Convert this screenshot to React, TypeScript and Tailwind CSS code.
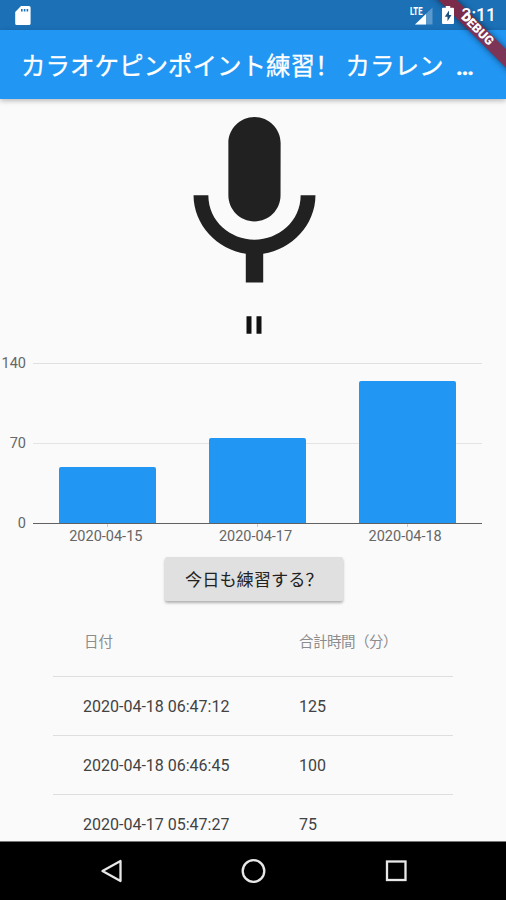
type Practice = {
  date: string;
  minutes: number;
};

const totals: Practice[] = [
  { date: '2020-04-15', minutes: 49 },
  { date: '2020-04-17', minutes: 75 },
  { date: '2020-04-18', minutes: 125 }
];

const history: Practice[] = [
  { date: '2020-04-18 06:47:12', minutes: 125 },
  { date: '2020-04-18 06:46:45', minutes: 100 },
  { date: '2020-04-17 05:47:27', minutes: 75 }
];

const CHART_MAX = 140;

// The icons and clock sit above the debug ribbon, the bar itself below it
const StatusBar = () => (
  <div className="flex h-[30px] shrink-0 items-center justify-between bg-[#1b70b6] pl-[15px] pr-[10px] text-white">
    <svg className="h-[19px] w-[16px]" viewBox="0 0 16 19" fill="currentColor">
      <path
        fillRule="evenodd"
        d="M6 0h8a1.6 1.6 0 0 1 1.6 1.6v15.8A1.6 1.6 0 0 1 14 19H1.8A1.6 1.6 0 0 1 .2 17.4V6zM6 3v2.400h1.600V3zm2.800 0v2.400h1.600V3zm2.800 0v2.400h1.600V3z"
      />
    </svg>
    <div className="relative z-30 flex items-center">
      <svg className="h-[19px] w-[24px]" viewBox="0 0 24 19">
        <path d="M22.500 1.500v17H5z" fill="#5b98cb" />
        <path d="M16 8v10.500H5z" fill="#fff" />
        <text x="0" y="9" fontSize="10" fontWeight="800" fontFamily="Roboto, sans-serif" fill="#fff" textLength="12.500" lengthAdjust="spacingAndGlyphs">
          LTE
        </text>
      </svg>
      <svg className="ml-[8px] h-[18px] w-[12px]" viewBox="0 0 12 18">
        <path d="M3.800 0h4.400v1.800H11a1 1 0 0 1 1 1V17a1 1 0 0 1-1 1H1a1 1 0 0 1-1-1V2.800a1 1 0 0 1 1-1h2.800z" fill="#fff" />
        <path d="M7 4.500 2.800 10.800h2.700v4.400L9.500 9H7z" fill="#1b4f80" />
      </svg>
      <span className="ml-[8px] pt-[2px] text-[17.500px] font-medium leading-none">3:11</span>
    </div>
  </div>
);

const DebugBanner = () => (
  <div className="absolute left-[407px] top-[23px] z-20 flex h-[13px] w-[140px] rotate-45 items-center justify-center bg-[#941c30]/80 shadow-[0_0_6px_rgba(0,0,0,0.5)]">
    <span className="text-[12.500px] font-black leading-none text-white">DEBUG</span>
  </div>
);

const PracticeChart = () => (
  <div className="mt-[14px] flex h-[193px] shrink-0 text-[14.500px] text-[#666]">
    <div className="flex h-[177px] w-[26px] flex-col justify-between text-right leading-[17px]">
      <span>140</span>
      <span>70</span>
      <span>0</span>
    </div>
    <div className="ml-[7px] w-[449px] pt-[8px]">
      <div className="relative h-[161px] border-b border-t border-b-[#616161] border-t-[#e0e0e0]">
        <div className="absolute top-[79px] h-px w-full bg-[#e4e4e4]" />
        <div className="relative flex h-full items-end justify-around">
          {totals.map((day) => (
            <div
              key={day.date}
              className="w-[97px] rounded-t-[2px] bg-[#2196f3]"
              style={{ height: `${(day.minutes / CHART_MAX) * 100}%` }}
            />
          ))}
        </div>
      </div>
      <div className="flex justify-around">
        {totals.map((day) => (
          <div key={day.date} className="flex w-[97px] flex-col items-center">
            <div className="h-[3px] w-px bg-[#ccc]" />
            <span className="-ml-[4px] mt-px leading-[18px]">{day.date}</span>
          </div>
        ))}
      </div>
    </div>
  </div>
);

const HistoryTable = () => (
  <div className="ml-[53px] mt-[7px] w-[400px] shrink-0">
    <div className="flex h-[69px] items-center border-b border-[#dedede] pl-[31px] pt-[2px] text-[14.500px] text-[#8c8c8c]">
      <span className="w-[215px]">日付</span>
      <span className="tracking-[-0.500px]">合計時間（分）</span>
    </div>
    {history.map((row) => (
      <div key={row.date} className="flex h-[59px] items-center border-b border-[#dedede] pl-[30px] pt-[2px] text-[16px] text-[#424242]">
        <span className="w-[216px]">{row.date}</span>
        <span>{row.minutes}</span>
      </div>
    ))}
  </div>
);

const App = () => (
  <div className="relative flex h-[900px] w-[506px] flex-col overflow-hidden bg-[#fafafa] font-['Roboto','Noto_Sans_CJK_SC',sans-serif]">
    <StatusBar />
    <header className="z-10 flex h-[69px] shrink-0 items-center bg-[#2196f3] pl-[21px] pt-[6px] text-white shadow-[0_2px_5px_rgba(0,0,0,0.25)]">
      <h1 className="whitespace-pre text-[24.500px] leading-none [-webkit-text-stroke:0.3px_white]">
        カラオケピンポイント練習！ カラレン  <span className="font-bold">…</span>
      </h1>
    </header>
    <DebugBanner />

    <main className="flex min-h-0 flex-1 flex-col overflow-hidden">
      <div className="flex shrink-0 flex-col items-center pl-[2px]">
        <svg className="h-[210px] w-[209px]" viewBox="0 0 24 24" fill="#212121">
          <path d="M12 14c1.660 0 2.990-1.340 2.990-3L15 5c0-1.660-1.340-3-3-3S9 3.340 9 5v6c0 1.660 1.340 3 3 3zm5.300-3c0 3-2.540 5.100-5.300 5.100S6.700 14 6.700 11H5c0 3.410 2.720 6.230 6 6.720V21h2v-3.280c3.280-.48 6-3.300 6-6.720h-1.700z" />
        </svg>
        <svg className="h-[32px] w-[30px]" viewBox="0 0 24 24" fill="#111">
          <path d="M6 19h4V5H6v14zm8-14v14h4V5h-4z" />
        </svg>
      </div>
      <PracticeChart />
      <button className="ml-[165px] mt-[9px] h-[44px] w-[178px] shrink-0 rounded-[2px] bg-[#e0e0e0] pl-[20px] pt-[3px] text-left text-[17.220px] text-[#222] shadow-[0_2px_3px_rgba(0,0,0,0.3)]">
        今日も練習する？
      </button>
      <HistoryTable />
    </main>

    <nav className="flex h-[59px] shrink-0 items-center border-t border-[#777] bg-black px-[99px]">
      <svg className="h-[26px] w-full" viewBox="0 0 308 26" fill="none" stroke="#e8e8e8" strokeWidth="2.300">
        <path d="M21.500 3v20L3.500 13z" strokeLinejoin="round" />
        <circle cx="154.500" cy="13" r="10.800" />
        <rect x="288" y="3.500" width="18.500" height="18.500" />
      </svg>
    </nav>
  </div>
);

export default App;
